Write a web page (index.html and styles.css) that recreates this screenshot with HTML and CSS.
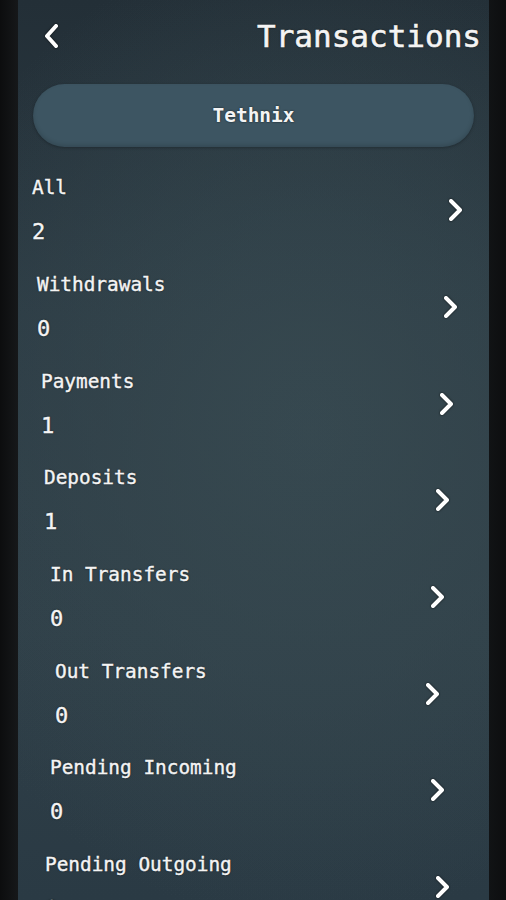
FILE: index.html
```html
<!DOCTYPE html>
<html lang="en">
<head>
    <meta charset="UTF-8">
    <meta name="viewport" content="width=device-width, initial-scale=1.0">
    <title>Transactions</title>
    <link rel="stylesheet" href="styles.css">
</head>
<body>

    <div class="screen">
        <!-- Cabecera -->
        <div class="header">
            <button class="back" aria-label="Back">
                <svg width="20" height="28" viewBox="0 0 20 28">
                    <path d="M14 4 L5 14 L14 24" fill="none" stroke="#fff" stroke-width="4" stroke-linejoin="round" stroke-linecap="round"/>
                </svg>
            </button>
            <h1>Transactions</h1>
        </div>

        <div class="account">Tethnix</div>

        <!-- Lista de tipos -->
        <div class="list">
            <div class="row s0">
                <div class="info"><span class="label">All</span><span class="value">2</span></div>
                <svg class="chev" width="18" height="26" viewBox="0 0 18 26"><path d="M4 4 L13 13 L4 22" fill="none" stroke="#fff" stroke-width="4" stroke-linejoin="round" stroke-linecap="round"/></svg>
            </div>
            <div class="row s1">
                <div class="info"><span class="label">Withdrawals</span><span class="value">0</span></div>
                <svg class="chev" width="18" height="26" viewBox="0 0 18 26"><path d="M4 4 L13 13 L4 22" fill="none" stroke="#fff" stroke-width="4" stroke-linejoin="round" stroke-linecap="round"/></svg>
            </div>
            <div class="row s2">
                <div class="info"><span class="label">Payments</span><span class="value">1</span></div>
                <svg class="chev" width="18" height="26" viewBox="0 0 18 26"><path d="M4 4 L13 13 L4 22" fill="none" stroke="#fff" stroke-width="4" stroke-linejoin="round" stroke-linecap="round"/></svg>
            </div>
            <div class="row s3">
                <div class="info"><span class="label">Deposits</span><span class="value">1</span></div>
                <svg class="chev" width="18" height="26" viewBox="0 0 18 26"><path d="M4 4 L13 13 L4 22" fill="none" stroke="#fff" stroke-width="4" stroke-linejoin="round" stroke-linecap="round"/></svg>
            </div>
            <div class="row s4">
                <div class="info"><span class="label">In Transfers</span><span class="value">0</span></div>
                <svg class="chev" width="18" height="26" viewBox="0 0 18 26"><path d="M4 4 L13 13 L4 22" fill="none" stroke="#fff" stroke-width="4" stroke-linejoin="round" stroke-linecap="round"/></svg>
            </div>
            <div class="row s5">
                <div class="info"><span class="label">Out Transfers</span><span class="value">0</span></div>
                <svg class="chev" width="18" height="26" viewBox="0 0 18 26"><path d="M4 4 L13 13 L4 22" fill="none" stroke="#fff" stroke-width="4" stroke-linejoin="round" stroke-linecap="round"/></svg>
            </div>
            <div class="row s4">
                <div class="info"><span class="label">Pending Incoming</span><span class="value">0</span></div>
                <svg class="chev" width="18" height="26" viewBox="0 0 18 26"><path d="M4 4 L13 13 L4 22" fill="none" stroke="#fff" stroke-width="4" stroke-linejoin="round" stroke-linecap="round"/></svg>
            </div>
            <div class="row s3b">
                <div class="info"><span class="label">Pending Outgoing</span><span class="value">0</span></div>
                <svg class="chev" width="18" height="26" viewBox="0 0 18 26"><path d="M4 4 L13 13 L4 22" fill="none" stroke="#fff" stroke-width="4" stroke-linejoin="round" stroke-linecap="round"/></svg>
            </div>
        </div>
    </div>

</body>
</html>
```

FILE: styles.css
```css
body {
    margin: 0;
    height: 900px;
    overflow: hidden;
    background: linear-gradient(90deg, #0c0d0e 0%, #17191b 4%, #121416 96%, #0d0e0f 100%);
    font-family: "DejaVu Sans Mono", "Liberation Mono", monospace;
    color: #f4f4f4;
}

.screen {
    width: 471px;
    height: 900px;
    margin-left: 18px;
    overflow: hidden;
    background:
        radial-gradient(ellipse 90% 55% at 62% 48%, #37495150 0%, rgba(55, 73, 81, 0) 100%),
        radial-gradient(ellipse 90% 55% at 62% 48%, #36484f 0%, rgba(54, 72, 79, 0) 100%),
        linear-gradient(180deg, #232f37 0%, #2b3a43 35%, #2f3f48 70%, #2a3a44 100%);
}

.header {
    height: 72px;
    display: flex;
    align-items: center;
    justify-content: space-between;
    padding: 0 8px 0 24px;
}

.back {
    background: none;
    border: none;
    padding: 0;
    display: flex;
    filter: drop-shadow(0 0 1px rgba(0, 0, 0, 0.7));
}

h1 {
    margin: 0;
    font-size: 31px;
    font-weight: normal;
    -webkit-text-stroke: 0.6px #f4f4f4;
    text-shadow: 0 0 2px rgba(0, 0, 0, 0.8);
}

.account {
    margin: 12px 15px 0;
    height: 63px;
    border-radius: 32px;
    background: #3d5562;
    box-shadow: inset 0 -2px 4px rgba(0, 0, 0, 0.15), 0 1px 3px rgba(0, 0, 0, 0.25);
    display: flex;
    align-items: center;
    justify-content: center;
    font-size: 19.5px;
    font-weight: bold;
    text-shadow: 0 0 2px rgba(0, 0, 0, 0.7);
}

.list {
    margin-top: 15px;
}

.row {
    height: 96.7px;
    display: flex;
    align-items: center;
    justify-content: space-between;
    padding-left: 14px;
    padding-right: 24px;
}

.info {
    display: flex;
    flex-direction: column;
    gap: 20px;
}

.label {
    font-size: 19.4px;
    line-height: 24px;
    -webkit-text-stroke: 0.4px #f4f4f4;
    text-shadow: 0 0 2px rgba(0, 0, 0, 0.7);
}

.value {
    font-size: 22px;
    line-height: 24px;
    -webkit-text-stroke: 0.4px #f4f4f4;
    text-shadow: 0 0 2px rgba(0, 0, 0, 0.7);
}

.chev {
    filter: drop-shadow(0 0 1px rgba(0, 0, 0, 0.7));
}

/* ligero desplazamiento de cada fila */
.s1 { padding-left: 19px; padding-right: 29px; }
.s2 { padding-left: 23px; padding-right: 33px; }
.s3 { padding-left: 26px; padding-right: 37px; }
.s4 { padding-left: 32px; padding-right: 42px; }
.s5 { padding-left: 37px; padding-right: 47px; }
.s3b { padding-left: 27px; padding-right: 37px; }
```
